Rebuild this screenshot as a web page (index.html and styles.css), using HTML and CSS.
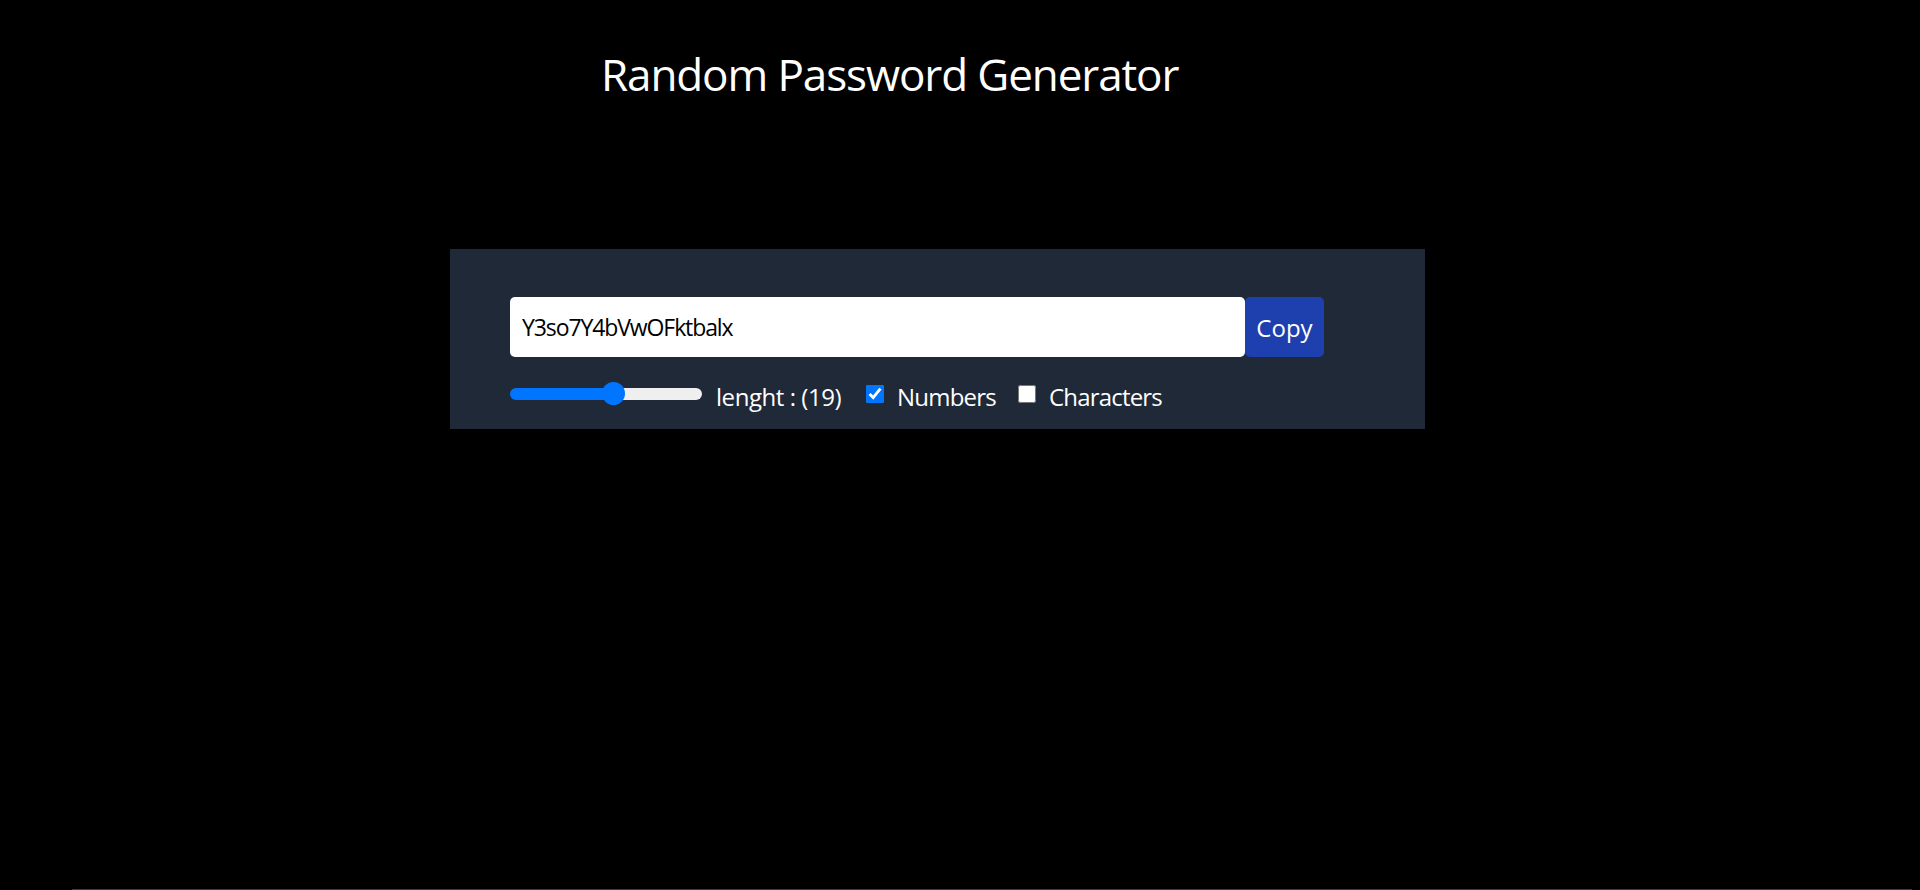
FILE: index.html
```html
<!DOCTYPE html>
<html lang="en">
<head>
<meta charset="utf-8">
<title>Random Password Generator</title>
<link rel="stylesheet" href="styles.css">
</head>
<body>
<div class="page">
  <h1 class="title">Random Password Generator</h1>
  <section class="card">
    <div class="field">
      <input class="pw" type="text" value="Y3so7Y4bVwOFktbalx" readonly>
      <button class="copy" type="button">Copy</button>
    </div>
    <div class="options">
      <input class="range" type="range" min="6" max="30" value="19" style="--fill:53.6%">
      <span class="len txt">lenght : (19)</span>
      <label class="opt"><input class="check" type="checkbox" checked><span class="txt">Numbers</span></label>
      <label class="opt"><input class="check" type="checkbox"><span class="txt">Characters</span></label>
    </div>
  </section>
</div>
<div class="edge"></div>
</body>
</html>
```

FILE: styles.css
```css
* { box-sizing: border-box; }

html, body {
  margin: 0;
  padding: 0;
  background: #000;
}

body {
  font-family: "Open Sans", "Noto Sans", sans-serif;
  color: #fff;
  height: 890px;
  overflow: hidden;
  display: flex;
  flex-direction: column;
}

.page {
  height: 889px;
  padding-top: 44px;
}

.title {
  margin: 0;
  padding-left: 601px;
  font-size: 44px;
  font-weight: 400;
  letter-spacing: -1.1px;
  line-height: 60px;
  color: #fff;
}

.card {
  margin-top: 145px;
  margin-left: 450px;
  width: 975px;
  height: 180px;
  background: #1f2937;
  padding: 48px 60px 0 60px;
}

.field {
  display: flex;
  height: 60px;
}

.pw {
  width: 735px;
  height: 60px;
  border: none;
  outline: none;
  border-radius: 5px;
  background: #fff;
  color: #000;
  padding: 0 12px;
  font-family: inherit;
  font-size: 23px;
  letter-spacing: -1.1px;
}

.copy {
  width: 79px;
  height: 60px;
  border: none;
  border-radius: 5px;
  background: #1e40af;
  color: #fff;
  font-family: inherit;
  font-size: 24px;
  padding: 0;
  cursor: pointer;
}

.options {
  display: flex;
  align-items: center;
  height: 33px;
  margin-top: 20px;
  font-size: 24px;
  line-height: 33px;
  letter-spacing: -0.8px;
}

.txt {
  padding-top: 5px;
}

.range {
  -webkit-appearance: none;
  appearance: none;
  width: 192px;
  height: 23px;
  margin: 0 14px 0 0;
  background: transparent;
}

.range::-webkit-slider-runnable-track {
  height: 12px;
  border-radius: 6px;
  background: linear-gradient(to right, #0075ff var(--fill), #efefef var(--fill));
}

.range::-webkit-slider-thumb {
  -webkit-appearance: none;
  appearance: none;
  width: 23px;
  height: 23px;
  border-radius: 50%;
  background: #0075ff;
  border: none;
  margin-top: -5.5px;
}

.len {
  margin-right: 25px;
  letter-spacing: -0.45px;
}

.opt {
  display: flex;
  align-items: center;
  gap: 13px;
  margin-right: 22px;
}

.check {
  width: 18px;
  height: 18px;
  margin: 0;
  accent-color: #0075ff;
}

.edge {
  height: 1px;
  margin-left: 72px;
  margin-right: 8px;
  background: #3c3c3c;
}
```
